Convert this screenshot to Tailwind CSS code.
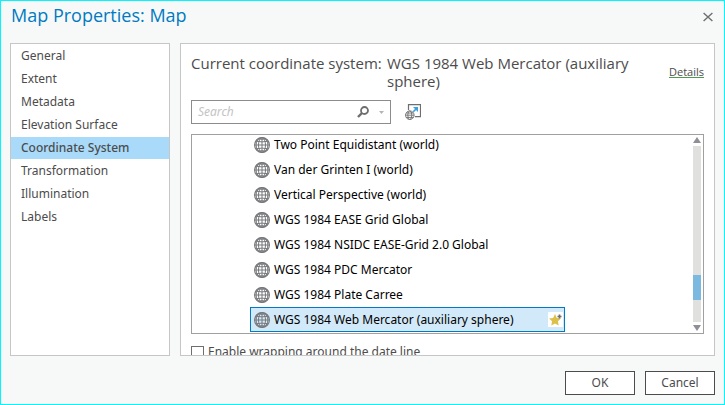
<!DOCTYPE html>
<html lang="en">
<head>
<meta charset="utf-8">
<title>Map Properties: Map</title>
<script src="https://cdn.jsdelivr.net/npm/@tailwindcss/browser@4"></script>
</head>
<body class="font-['Noto_Sans','Open_Sans',sans-serif] text-[#4c4c4c]">
<svg class="hidden" aria-hidden="true">
  <symbol id="globe" viewBox="0 0 16 16">
    <circle cx="8" cy="8" r="7.4" fill="none" stroke="#77787b" stroke-width="1.2"/>
    <g fill="none" stroke="#77787b" stroke-width="1">
      <path d="M8 .5v15M.5 8h15M1.8 4.200q6.200 1.400 12.400 0M1.800 11.800q6.200-1.400 12.400 0M4 1.800q4 1 8 0M4 14.200q4-1 8 0"/>
      <ellipse cx="8" cy="8" rx="3.500" ry="7.400"/>
      <ellipse cx="8" cy="8" rx="5.900" ry="7.400"/>
    </g>
  </symbol>
</svg>
<div class="flex h-screen flex-col border border-[#00f7ff] bg-[#f7f9f8]">
  <header class="flex h-[42px] shrink-0 items-start justify-between pl-[10px] pr-[11px]">
    <h1 class="font-['Open_Sans','Noto_Sans',sans-serif] text-[18px] leading-[28px] text-[#007ac2]">Map Properties: Map</h1>
    <button type="button" aria-label="Close" class="mt-[11px]">
      <svg class="h-[10px] w-[10px]" viewBox="0 0 10 10" fill="none" stroke="#6e6e6e" stroke-width="1.400"><path d="M.6 1 9.400 9M9.400 1 .6 9"/></svg>
    </button>
  </header>
  <main class="flex min-h-0 flex-1 gap-[10px] px-[9px]">
    <nav class="w-[160px] shrink-0 border border-[#c6c6c6] bg-white py-px text-[12px] leading-[22px]">
      <ul class="flex flex-col gap-px">
        <li><a href="#general" class="block px-[10px]">General</a></li>
        <li><a href="#extent" class="block px-[10px]">Extent</a></li>
        <li><a href="#metadata" class="block px-[10px]">Metadata</a></li>
        <li><a href="#elevation" class="block px-[10px]">Elevation Surface</a></li>
        <li><a href="#coordinate" aria-current="page" class="block bg-[#a9dafa] px-[10px] font-medium">Coordinate System</a></li>
        <li><a href="#transformation" class="block px-[10px]">Transformation</a></li>
        <li><a href="#illumination" class="block px-[10px]">Illumination</a></li>
        <li><a href="#labels" class="block px-[10px]">Labels</a></li>
      </ul>
    </nav>
    <section class="flex min-w-0 flex-1 flex-col overflow-hidden border border-[#c6c6c6] bg-white px-[10px] pt-[10px]">
      <div class="flex h-[46px] shrink-0 font-['Open_Sans','Noto_Sans',sans-serif] text-[15px] leading-[18px]">
        <h2 class="w-[196px] shrink-0 whitespace-nowrap">Current coordinate system:</h2>
        <p class="min-w-0 flex-1 pr-[20px]">WGS 1984 Web Mercator (auxiliary sphere)</p>
        <a href="#details" class="mt-[11px] h-[13px] border-b border-[#4f9a4f] text-[11px] leading-[14px]">Details</a>
      </div>
      <div class="flex shrink-0 items-center gap-[14px]">
        <div class="flex h-[24px] w-[200px] items-center border border-[#8c8c8c] px-[6px]">
          <input type="search" aria-label="Search" placeholder="Search" class="min-w-0 flex-1 text-[12px] italic outline-none placeholder:text-[#c4c4c4]">
          <svg class="h-[12px] w-[12px]" viewBox="0 0 12 12" fill="none" stroke="#6e6e6e"><circle cx="7.500" cy="4.500" r="3.500" stroke-width="1.800"/><path d="M5 7 1 11" stroke-width="2.400"/></svg>
          <svg class="ml-[10px] h-[3px] w-[5px]" viewBox="0 0 5 3" fill="#b5b5b5"><path d="M0 0h5L2.500 3z"/></svg>
        </div>
        <button type="button" aria-label="Import coordinate system">
          <svg class="h-[16px] w-[16px]" viewBox="0 0 16 16" fill="none"><path d="M3.500 6V.6h12v12H10" stroke="#6e6e6e" stroke-width="1.200"/><path d="M7.500 8.500l4-4" stroke="#3ba0dc" stroke-width="1.700"/><path d="M8 3h5v5z" fill="#3ba0dc"/><circle cx="4.800" cy="11.200" r="4.800" fill="#fff"/><g stroke="#6e6e6e" stroke-width=".9"><circle cx="4.800" cy="11.200" r="4.300"/><ellipse cx="4.800" cy="11.200" rx="2" ry="4.300"/><path d="M.5 11.200h8.600M1.200 9h7.200M1.200 13.400h7.200"/></g></svg>
        </button>
      </div>
      <div class="mt-[10px] flex h-[200px] shrink-0 border border-[#a0a0a0] pr-[2px]">
        <ul class="flex min-w-0 flex-1 flex-col justify-end overflow-hidden pb-px pl-[58px] text-[12px] text-black">
          <li class="flex h-[25px] w-[315px] shrink-0 items-center gap-[4px] px-[4px]"><svg class="h-[16px] w-[16px]"><use href="#globe"/></svg>Two Point Equidistant (world)</li>
          <li class="flex h-[25px] w-[315px] shrink-0 items-center gap-[4px] px-[4px]"><svg class="h-[16px] w-[16px]"><use href="#globe"/></svg>Van der Grinten I (world)</li>
          <li class="flex h-[25px] w-[315px] shrink-0 items-center gap-[4px] px-[4px]"><svg class="h-[16px] w-[16px]"><use href="#globe"/></svg>Vertical Perspective (world)</li>
          <li class="flex h-[25px] w-[315px] shrink-0 items-center gap-[4px] px-[4px]"><svg class="h-[16px] w-[16px]"><use href="#globe"/></svg>WGS 1984 EASE Grid Global</li>
          <li class="flex h-[25px] w-[315px] shrink-0 items-center gap-[4px] px-[4px]"><svg class="h-[16px] w-[16px]"><use href="#globe"/></svg>WGS 1984 NSIDC EASE-Grid 2.0 Global</li>
          <li class="flex h-[25px] w-[315px] shrink-0 items-center gap-[4px] px-[4px]"><svg class="h-[16px] w-[16px]"><use href="#globe"/></svg>WGS 1984 PDC Mercator</li>
          <li class="flex h-[25px] w-[315px] shrink-0 items-center gap-[4px] px-[4px]"><svg class="h-[16px] w-[16px]"><use href="#globe"/></svg>WGS 1984 Plate Carree</li>
          <li class="flex h-[25px] w-[315px] shrink-0 items-center gap-[4px] border border-[#007ac2] bg-[#d2e9f9] pl-[3px] pr-px"><svg class="h-[16px] w-[16px]"><use href="#globe"/></svg>WGS 1984 Web Mercator (auxiliary sphere)
            <button type="button" aria-label="Add to favorites" class="ml-auto bg-white"><svg class="h-[15px] w-[15px]" viewBox="0 0 15 15"><path d="M7 2 8.800 5.900l4.200.5-3.100 2.900.8 4.200L7 11.400l-3.700 2.100.8-4.200L1 6.400l4.200-.5z" fill="#dcc04a"/><path d="M11.500 2.500v4M9.500 4.500h4" stroke="#6e6e6e" stroke-width="1.700"/></svg></button>
          </li>
        </ul>
        <div class="flex w-[8px] shrink-0 flex-col items-center gap-[3px] py-[2px]" aria-hidden="true">
          <svg class="h-[6px] w-[8px] shrink-0" viewBox="0 0 8 6" fill="#8f8f96"><path d="M4 0 8 6H0z"/></svg>
          <div class="flex w-full flex-1 flex-col justify-end bg-[#e0e0df] pb-[22px]"><div class="h-[25px] bg-[#7cb9e0]"></div></div>
          <svg class="h-[6px] w-[8px] shrink-0" viewBox="0 0 8 6" fill="#8f8f96"><path d="M0 0h8L4 6z"/></svg>
        </div>
      </div>
      <label class="mt-[8px] flex h-[20px] shrink-0 items-center gap-[4px] text-[12px]"><input type="checkbox" class="h-[13px] w-[13px] appearance-none border border-[#6e6e6e] bg-white">Enable wrapping around the date line</label>
    </section>
  </main>
  <footer class="flex shrink-0 justify-end gap-[10px] px-[9px] pb-[9px] pt-[15px] text-[12px]">
    <button type="button" class="h-[24px] w-[70px] border border-[#4c4c4c] bg-white">OK</button>
    <button type="button" class="h-[24px] w-[70px] border border-[#4c4c4c] bg-white">Cancel</button>
  </footer>
</div>
</body>
</html>
